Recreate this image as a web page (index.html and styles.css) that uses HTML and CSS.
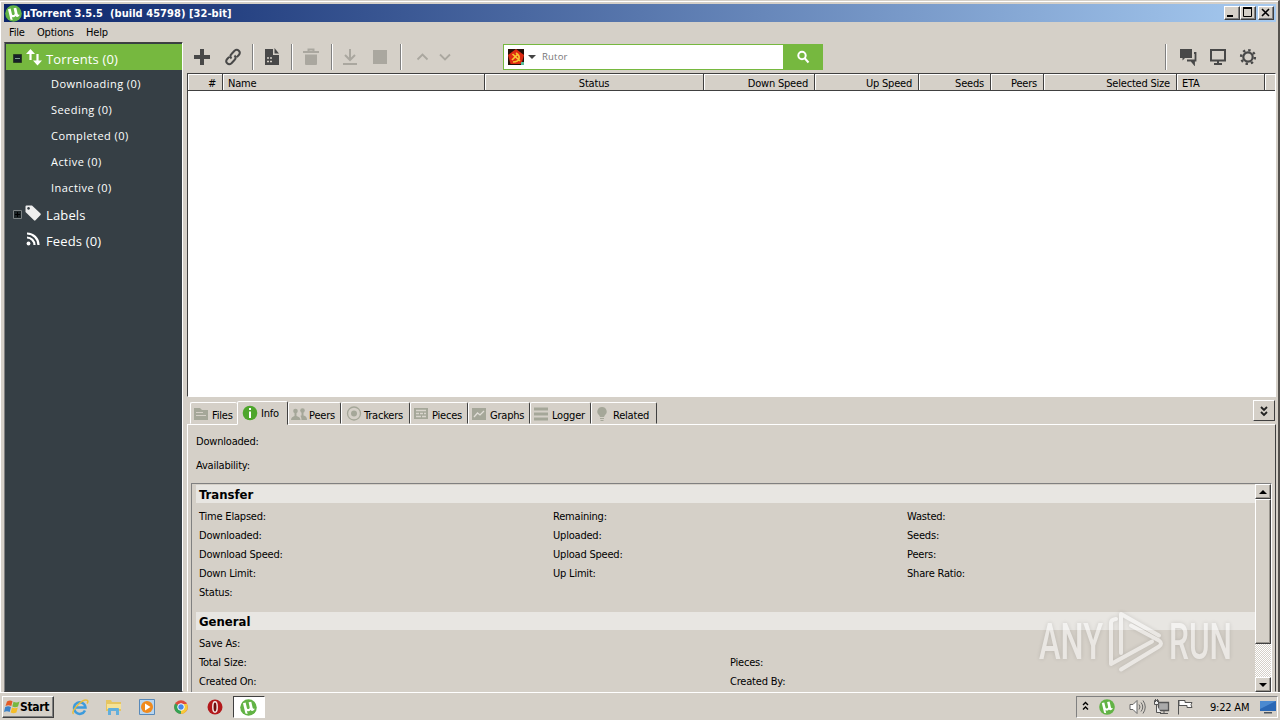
FILE: index.html
```html
<!DOCTYPE html>
<html lang="en">
  <head>
    <meta charset="UTF-8" />
    <title>µTorrent 3.5.5 (build 45798) [32-bit]</title>
    <link rel="stylesheet" href="styles.css">
  </head>
  <body>
    <!-- Shared shapes -->
    <svg class="defs" width="0" height="0">
      <symbol id="ut" viewBox="0 0 16 16">
        <circle cx="8" cy="8" r="7.8" fill="#62b345" />
        <path d="M2.800 4l2.500-.6 1.200 5c.5 1.800 2.900 1.300 2.600-.6L8.100 3l2.500-.5 1.300 5.700c.3 1.100 1 1.200 2 .8-.5 2.200-2.900 2.900-4 1.400-1 1.300-2.300 1.500-3.400.8l.7 3-2.100-.5z" fill="#fff" />
      </symbol>
    </svg>

    <div class="window">
      <div class="title-bar">
        <svg class="title-icon" width="17" height="17"><use href="#ut" /></svg>
        <span class="title-text">µTorrent 3.5.5&nbsp; (build 45798) [32-bit]</span>
        <div class="win-btn"><svg width="12" height="10"><path d="M2 9h6" stroke="#000" stroke-width="2" /></svg></div>
        <div class="win-btn"><svg width="12" height="10"><path d="M2.500 1v8.500h8V1" fill="none" stroke="#000" /><path d="M2 1h9" stroke="#000" stroke-width="2" /></svg></div>
        <div class="win-btn close"><svg width="12" height="10"><path d="M3 2l7 7M10 2L3 9" stroke="#000" stroke-width="1.600" /></svg></div>
      </div>

      <div class="menu-bar">
        <span class="m-file">File</span>
        <span class="m-options">Options</span>
        <span class="m-help">Help</span>
      </div>

      <div class="main">
        <!-- Categories -->
        <div class="sidebar">
          <div class="cat active">
            <svg width="40" height="26">
              <path d="M7.500 10.500h8v8h-8z" fill="#17202a" stroke="#2b4020" /><path d="M9 14.500h5" stroke="#7d9c8c" />
              <path d="M24.500 16V9M31.500 10v8" stroke="#fff" stroke-width="2.200" /><path d="M20 10l4.500-5L29 10zM27 16.500l4.500 5 4.500-5z" fill="#fff" />
            </svg>
            <span>Torrents (0)</span>
          </div>
          <div class="sub">Downloading (0)</div>
          <div class="sub">Seeding (0)</div>
          <div class="sub">Completed (0)</div>
          <div class="sub">Active (0)</div>
          <div class="sub">Inactive (0)</div>
          <div class="cat labels">
            <svg width="40" height="26">
              <path d="M7.500 9.500h8v8h-8z" fill="#1c2427" stroke="#7b8183" /><path d="M9 13.500h5M11.500 11v5" stroke="#000" />
              <path fill-rule="evenodd" d="M19.500 5.500q0-1 1-1h5.500l8.500 8q.7.7 0 1.400l-5 5.400q-.7.700-1.500 0l-8.500-8.300zM22.500 6a1.400 1.400 0 1 0 .1 0z" fill="#eee" />
            </svg>
            <span>Labels</span>
          </div>
          <div class="cat feeds">
            <svg width="40" height="26">
              <circle cx="22.500" cy="16.500" r="1.900" fill="#fff" /><path d="M21 10.500a7.500 7.500 0 0 1 7.500 7.500M21 6.500a11.500 11.500 0 0 1 11.500 11.500" fill="none" stroke="#fff" stroke-width="2.200" />
            </svg>
            <span>Feeds (0)</span>
          </div>
        </div>

        <div class="content">
          <div class="toolbar">
            <svg class="tool add" width="18" height="18"><path d="M9 1v16M1 9h16" stroke="#484848" stroke-width="4" /></svg>
            <svg class="tool link" width="18" height="18" fill="none" stroke="#484848" stroke-width="2"><path d="M7.500 10.500c-2-2-1-3.500 0-4.500l3-3.200c3-2.700 7 1 4.300 4.200l-2 2.200M10.500 7.500c2 2 1 3.500 0 4.500l-3 3.200c-3 2.700-7-1-4.300-4.200l2-2.200" /></svg>
            <i class="sep"></i>
            <svg class="tool create" width="16" height="17"><path d="M1 1h8v6h6v10H1z" fill="#484848" /><path d="M10.500 0l4.500 5.500h-4.500z" fill="#484848" /><path d="M3 10h2M6 10h2M3 13.500h2M6 13.500h2" stroke="#d5d0c8" stroke-width="1.500" /></svg>
            <i class="sep"></i>
            <svg class="tool trash" width="18" height="18"><path d="M1 4h16M6.500 3V1.500h5V3" fill="none" stroke="#aaa79f" stroke-width="2" /><path d="M3 6.500h12V16q0 1-1 1H4q-1 0-1-1z" fill="#aaa79f" /></svg>
            <i class="sep"></i>
            <svg class="tool down" width="16" height="18" fill="none" stroke="#aaa79f" stroke-width="2"><path d="M8 1v11M3 7l5 5 5-5M1 16h14" /></svg>
            <i class="tool stop"></i>
            <i class="sep"></i>
            <svg class="tool chev" width="36" height="10" fill="none" stroke="#aaa79f" stroke-width="1.800"><path d="M1.500 7.500l5-5 5 5M24 2.500l5 5 5-5" /></svg>

            <div class="search">
              <svg width="16" height="16">
                <path d="M0 0h16v16H0z" fill="#241008" /><path d="M8 0l8 6-2.500 9h-11L0 6z" fill="#de2a12" /><path d="M5 13c7 0 8-6 3-9M4 11l6-6M4.500 5L12 12" fill="none" stroke="#f8c532" stroke-width="1.700" /><path d="M13 13h3v3h-3z" fill="#58bb99" />
              </svg>
              <i class="drop"></i>
              <span>Rutor</span>
              <div class="go"><svg width="14" height="14" fill="none" stroke="#fff" stroke-width="2"><circle cx="6" cy="5.500" r="3.700" /><path d="M8.500 8l4 4.500" /></svg></div>
            </div>

            <div class="right-tools">
              <i class="sep"></i>
              <svg width="18" height="18"><path d="M1 1h12v9H6l-2.500 2.500V10H1z" fill="#484848" /><path d="M15 5h1.500v7.500H8M12.500 13l2.500 3v-4" fill="none" stroke="#484848" stroke-width="1.800" /></svg>
              <svg width="18" height="18"><path d="M2 2h14v10.500H2z" fill="none" stroke="#484848" stroke-width="2" /><path d="M9 13v3M5 16h8" stroke="#484848" stroke-width="2" /></svg>
              <svg width="18" height="18" fill="none" stroke="#484848"><circle cx="9" cy="9" r="4.700" stroke-width="2.200" /><circle cx="9" cy="9" r="6.900" stroke-width="2.400" stroke-dasharray="2.400 3.020" /></svg>
            </div>
          </div>

          <!-- Torrent list -->
          <div class="list">
            <div class="list-head">
              <div class="right">#</div>
              <div>Name</div>
              <div class="center">Status</div>
              <div class="right">Down Speed</div>
              <div class="right">Up Speed</div>
              <div class="right">Seeds</div>
              <div class="right">Peers</div>
              <div class="right">Selected Size</div>
              <div>ETA</div>
              <div></div>
            </div>
          </div>

          <!-- Detail tabs -->
          <div class="tabs">
            <div class="tab t-files"><svg width="16" height="16"><path d="M1 2h6l2 2h6v10H1z" fill="#a5a799" /><path d="M3 6.500h7M3 9.500h10" stroke="#d5d0c8" /></svg><span>Files</span></div>
            <div class="tab t-info"><svg width="16" height="16"><circle cx="8" cy="8" r="7.300" fill="#4ea62c" /><path d="M8 3v2M8 6.500V13" stroke="#fff" stroke-width="2" /></svg><span>Info</span></div>
            <div class="tab t-peers"><svg width="16" height="16" fill="#a5a799"><circle cx="4.500" cy="5" r="2.300" /><path d="M0 14q0-3 3.500-4V7h2v3Q9.500 11 9.500 14z" /><circle cx="11.500" cy="4.500" r="2.300" /><path d="M10.500 14H16q0-4-3.500-4.500V6h-2v3.500l-1 .3q1 2 1 4.200z" /></svg><span>Peers</span></div>
            <div class="tab t-trackers"><svg width="16" height="16"><circle cx="8" cy="7.500" r="6.500" fill="none" stroke="#a5a799" stroke-width="1.300" /><circle cx="8" cy="7.500" r="3" fill="#a5a799" /></svg><span>Trackers</span></div>
            <div class="tab t-pieces"><svg width="16" height="16"><path d="M1 2h14v11H1z" fill="#a5a799" /><path d="M3 4.500h10M3 7.500h3m1 0h3m1 0h2M3 10.500h5m1 0h4" stroke="#d9d5cd" stroke-width="1.300" /></svg><span>Pieces</span></div>
            <div class="tab t-graphs"><svg width="16" height="16"><path d="M1 2h14v12H1z" fill="#a5a799" /><path d="M3 11l3.500-4 2.500 2 4-4" fill="none" stroke="#e0ddd6" stroke-width="1.300" /></svg><span>Graphs</span></div>
            <div class="tab t-logger"><svg width="16" height="16"><path d="M1 3h14M1 8h14M1 13h14" stroke="#a5a799" stroke-width="3" /></svg><span>Logger</span></div>
            <div class="tab t-related"><svg width="16" height="16"><path d="M8 1a4.500 4.500 0 0 1 3 8L10 11H6L5 9a4.500 4.500 0 0 1 3-8z" fill="#a5a799" /><path d="M6 12.500h4M6.500 14.500h3" stroke="#a5a799" /></svg><span>Related</span></div>
            <div class="collapse"><svg width="10" height="12" fill="none" stroke="#222" stroke-width="1.800"><path d="M2 2l3 3 3-3M2 7l3 3 3-3" /></svg></div>
          </div>

          <div class="panel">
            <div class="bar-label">Downloaded:</div>
            <div class="bar-label">Availability:</div>
            <div class="info-box">
              <div class="info">
                <h2>Transfer</h2>
                <div class="fields three">
                  <span>Time Elapsed:</span><span>Remaining:</span><span>Wasted:</span>
                  <span>Downloaded:</span><span>Uploaded:</span><span>Seeds:</span>
                  <span>Download Speed:</span><span>Upload Speed:</span><span>Peers:</span>
                  <span>Down Limit:</span><span>Up Limit:</span><span>Share Ratio:</span>
                  <span>Status:</span>
                </div>
                <h2>General</h2>
                <div class="fields two">
                  <span>Save As:</span><span></span>
                  <span>Total Size:</span><span>Pieces:</span>
                  <span>Created On:</span><span>Created By:</span>
                </div>
              </div>
              <div class="scroll">
                <div class="raised arrow"><svg width="8" height="4"><path d="M0 4l4-4 4 4z" /></svg></div>
                <div class="raised thumb"></div>
                <div class="raised arrow last"><svg width="8" height="4"><path d="M0 0h8L4 4z" /></svg></div>
              </div>
            </div>
          </div>
        </div>
      </div>
    </div>

    <div class="taskbar">
      <div class="start">
        <svg width="16" height="16"><path d="M3 2.500q3-2 5.500-.3L7.300 7Q4.500 5.500 1.500 7z" fill="#e35b26" /><path d="M9.500 2.700q3 1.500 6-.2L14 7.500q-3 1.500-5.700 0z" fill="#76b83f" /><path d="M1.200 8q3-1.700 5.800 0l-1.300 5Q3 11.500 0 13z" fill="#3c82c8" /><path d="M8 8.500q3 1.500 5.800 0l-1.400 5q-3 1.500-5.700 0z" fill="#f5bd28" /></svg>
        <b>Start</b>
      </div>
      <div class="quick">
        <svg width="18" height="18"><path d="M14 12.500A5.800 5.800 0 1 1 14.500 9.500H4.500" fill="none" stroke="#3d9bdc" stroke-width="2.500" /><path d="M2.500 16C-1 13 12 0 16.500 2.500q1 1-.5 3" fill="none" stroke="#e8bd3c" stroke-width="1.500" /></svg>
        <svg width="18" height="18"><path d="M1 2h5l1 2h9v9H1z" fill="#e6c561" /><path d="M2 6h14v5H2z" fill="#f6e296" /><path d="M3 17v-6q0-1 1-1h9q1 0 1 1v6h-3v-4H6v4z" fill="#62afdc" /></svg>
        <svg width="18" height="18"><path d="M1.500 1.500h15v15h-15z" fill="#b8d5ef" stroke="#5889b9" /><circle cx="9" cy="9" r="6" fill="#f08a1d" /><path d="M7 5.500l5.500 3.500L7 12.500z" fill="#fff" /></svg>
        <svg width="18" height="18"><circle cx="9" cy="9" r="6.800" fill="#dd4b3d" /><path d="M9 9L3.100 5.600A6.800 6.800 0 0 0 9 15.800z" fill="#35a354" /><path d="M9 9v6.800A6.800 6.800 0 0 0 15 6H9z" fill="#f7ca38" /><circle cx="9" cy="9" r="3.300" fill="#4688e8" stroke="#fff" /></svg>
        <svg width="18" height="18"><circle cx="9" cy="9" r="7.500" fill="#b3181b" /><ellipse cx="9" cy="9" rx="2.200" ry="5.200" fill="#700c0d" stroke="#f3e6e4" stroke-width="1.500" /></svg>
      </div>
      <div class="task"><svg width="17" height="17"><use href="#ut" /></svg></div>
      <div class="tray">
        <svg class="up" width="8" height="10" fill="none" stroke="#000" stroke-width="1.400"><path d="M1 4l2.500-2.500L6 4M1 8.500L3.500 6 6 8.500" /></svg>
        <svg class="t-ut" width="16" height="16"><use href="#ut" /></svg>
        <svg class="vol" width="17" height="16" fill="#fff" stroke="#666"><path d="M1 5.500h3l4-4v13l-4-4H1z" /><path d="M10 5.500q2 2.500 0 5M12 3.500q3.500 4.500 0 9M14 1.500q4.500 6.500 0 13" fill="none" /></svg>
        <svg class="net" width="17" height="16" fill="#eee" stroke="#555"><path d="M5.500 3.500h10v8h-10z" fill="#aaa" stroke-width="1.300" /><path d="M7 14.500h8M11 12v2M1.500 1.500h4v4h-4zM3.500 6v7.500H8M2.500 0v3M4.500 0v3" /></svg>
        <svg class="flag" width="17" height="16" fill="#fff" stroke="#555"><path d="M1.500 1v14.500M2 1.500h6v2h7q-2 2 0 5h-5v-2H2z" /></svg>
        <span class="clock">9:22 AM</span>
        <svg class="desk" width="16" height="14"><path d="M0 1h16v10H0z" fill="#2a68b5" /><path d="M0 1h16L0 9z" fill="#4b8ad0" /><path d="M4 12h8v1.500H4z" fill="#49535d" /></svg>
      </div>
    </div>

    <!-- Watermark over the window -->
    <svg class="watermark" width="200" height="70">
      <g class="shade"><use href="#mark" /></g>
      <g id="mark">
        <text x="2" y="52" textLength="64" lengthAdjust="spacingAndGlyphs">ANY</text>
        <text x="132" y="52" textLength="63" lengthAdjust="spacingAndGlyphs">RUN</text>
        <path d="M84 46V7l38 21.500M79 12q-5 .5-5 4V57l41-22.500M84 62.500l38-23q4-3 0-6L94 18.500" />
      </g>
    </svg>
  </body>
</html>
```
FILE: styles.css
```css
* {
  box-sizing: border-box;
}

body {
  margin: 0;
  width: 1280px;
  height: 720px;
  overflow: hidden;
  background: #d5d0c8;
  color: #000;
  font-family: "DejaVu Sans Condensed", "DejaVu Sans", sans-serif;
  font-size: 11px;
  letter-spacing: -0.2px;
  white-space: nowrap;
}

svg {
  display: block;
  flex: none;
}

.defs {
  position: absolute;
}

.window {
  height: 692px;
  padding: 3px 2px 0 4px;
  border-right: 2px solid #55524e;
  border-top: 1px solid #d5d0c8;
  box-shadow: inset 1px 1px #fff;
  overflow: hidden;
}

.title-bar {
  display: flex;
  align-items: center;
  height: 18px;
  padding: 0 2px 0 1px;
  background: linear-gradient(90deg, #0a246a, #a6caf0);
  color: #fff;
}

.title-text {
  flex: 1;
  margin-left: 1px;
  font-size: 11px;
  font-weight: bold;
  letter-spacing: 0.05px;
}

.win-btn {
  width: 16px;
  height: 14px;
  background: #d5d0c8;
  border: 1px solid;
  border-color: #fff #404040 #404040 #fff;
  box-shadow: inset -1px -1px #808080;
}

.win-btn.close {
  margin-left: 2px;
}

.menu-bar {
  display: flex;
  height: 20px;
  padding-left: 5px;
  line-height: 22px;
}

.m-file {
  width: 28px;
}

.m-options {
  width: 49px;
}

.main {
  display: flex;
  gap: 4px;
  height: 650px;
}

/* Sidebar */
.sidebar {
  width: 179px;
  padding: 1px 0 0 1px;
  background: #363f45;
  border: 1px solid;
  border-color: #404040 #fff #404040 #808080;
  color: #fff;
  font-family: "Open Sans", sans-serif;
  font-size: 11px;
  letter-spacing: 0.45px;
}

.cat {
  display: flex;
  align-items: center;
  height: 26px;
  font-size: 13px;
  letter-spacing: 0.15px;
}

.cat span {
  padding-top: 1px;
}

.cat.active {
  background: #76b83f;
}

.cat.active span {
  padding-top: 3px;
}

.cat.labels {
  margin-top: 1px;
}

.sub {
  height: 26px;
  padding-left: 45px;
  line-height: 27px;
}

/* Toolbar */
.content {
  flex: 1;
  min-width: 0;
}

.toolbar {
  display: flex;
  align-items: center;
  height: 31px;
  padding: 0 0 2px 6px;
}

.sep {
  width: 2px;
  height: 26px;
  border-left: 1px solid #808080;
  border-right: 1px solid #fff;
}

.tool {
  flex: none;
}

.link {
  margin: 0 10px 0 13px;
}

.create {
  margin: 0 11px 0 10px;
}

.trash {
  margin: 0 11px 0 9px;
}

.down {
  margin: 0 15px 0 9px;
}

.stop {
  width: 14px;
  height: 14px;
  margin-right: 13px;
  background: #aaa79f;
}

.chev {
  margin-left: 14px;
}

.search {
  display: flex;
  align-items: center;
  width: 320px;
  height: 26px;
  margin-left: 51px;
  padding-left: 4px;
  background: #fff;
  border: 1px solid #76b83f;
  color: #777;
  font-family: "Open Sans", sans-serif;
  font-size: 9.5px;
  letter-spacing: 0.2px;
}

.drop {
  margin: 0 6px 0 4px;
  border: 4px solid transparent;
  border-top-color: #444;
  border-bottom: 0;
}

.go {
  display: flex;
  align-items: center;
  justify-content: center;
  width: 40px;
  height: 26px;
  margin: 0 -1px 0 auto;
  background: #76b83f;
}

.right-tools {
  display: flex;
  align-items: center;
  gap: 12px;
  margin: 0 19px 0 auto;
}

/* Torrent list */
.list {
  height: 324px;
  background: #fff;
  border: 1px solid;
  border-color: #404040 #fff #fff #404040;
}

.list-head {
  display: grid;
  grid-template-columns: 35px 262px 219px 111px 104px 72px 53px 133px 88px 1fr;
  height: 17px;
  background: #d5d0c8;
  border-bottom: 1px solid #404040;
  line-height: 19px;
}

.list-head div {
  height: 16px;
  padding: 0 5px;
  border-right: 1px solid #404040;
  box-shadow: inset 1px 1px #fff;
}

.list-head div:last-child {
  border-right: 0;
}

.list-head .right {
  padding-right: 6px;
  text-align: right;
}

.list-head .center {
  text-align: center;
}

/* Tabs */
.tabs {
  display: flex;
  align-items: flex-end;
  height: 27px;
  padding-left: 3px;
}

.tab {
  display: flex;
  align-items: center;
  gap: 3px;
  height: 22px;
  padding: 2px 0 0 2px;
  border: 1px solid;
  border-color: #fff #404040 transparent #fff;
  border-radius: 2px 2px 0 0;
}

.tab span {
  padding-top: 2px;
}

.t-files {
  width: 47px;
  border-right: 0;
}

.t-info {
  z-index: 1;
  width: 51px;
  height: 24px;
  margin-bottom: -1px;
  padding: 0 0 1px 4px;
  background: #d5d0c8;
}

.t-peers {
  gap: 2px;
  width: 53px;
}

.t-trackers {
  gap: 2px;
  width: 69px;
  padding-left: 4px;
}

.t-pieces {
  width: 58px;
}

.t-graphs {
  width: 62px;
}

.t-logger {
  width: 61px;
}

.t-related {
  width: 66px;
}

.collapse {
  display: flex;
  align-items: center;
  justify-content: center;
  width: 22px;
  height: 21px;
  margin: 0 1px 3px auto;
  border: 1px solid;
  border-color: #fff #404040 #404040 #fff;
}

.panel {
  height: 268px;
  padding: 5px 3px 0 3px;
  border: 1px solid;
  border-color: #fff #404040 transparent #fff;
}

.bar-label {
  height: 24px;
  padding-left: 5px;
  line-height: 24px;
}

.info-box {
  display: flex;
  height: 210px;
  margin-top: 5px;
  border: 1px solid;
  border-color: #808080 #fff transparent #808080;
}

.info {
  flex: 1;
  padding: 1px 0 0 4px;
}

h2 {
  height: 18px;
  margin: 0;
  padding-left: 3px;
  background: #e8e6e2;
  font-size: 13px;
  line-height: 19px;
  letter-spacing: 0;
}

.fields {
  display: grid;
  grid-auto-rows: 19px;
  padding: 4px 0 10px 3px;
  line-height: 19px;
}

.three {
  grid-template-columns: 354px 354px 1fr;
}

.two {
  grid-template-columns: 531px 1fr;
}

.scroll {
  display: flex;
  flex-direction: column;
  width: 16px;
  background: repeating-conic-gradient(#fff 0 25%, #d5d0c8 0 50%) 0 0 / 2px 2px;
}

.raised {
  background: #d5d0c8;
  border: 1px solid;
  border-color: #fff #404040 #404040 #fff;
  box-shadow: inset -1px -1px #9a968f;
}

.arrow {
  display: flex;
  align-items: center;
  justify-content: center;
  height: 15px;
}

.arrow.last {
  margin-top: auto;
}

.thumb {
  height: 145px;
}

/* Taskbar */
.taskbar {
  display: flex;
  align-items: center;
  height: 28px;
  padding: 1px 2px 0;
  background: #d5d0c8;
  border-top: 1px solid #fff;
}

.start {
  display: flex;
  align-items: center;
  width: 52px;
  height: 22px;
  padding-left: 1px;
  border: 1px solid;
  border-color: #fff #404040 #404040 #fff;
  box-shadow: inset -1px -1px #808080;
  font-size: 12px;
  letter-spacing: -0.3px;
}

.quick {
  display: flex;
  gap: 15.700px;
  margin-left: 17px;
}

.task {
  display: flex;
  align-items: center;
  justify-content: center;
  width: 32px;
  height: 22px;
  margin-left: 9px;
  background: #fff;
  border: 1px solid;
  border-color: #404040 #fff #fff #404040;
}

.tray {
  display: flex;
  align-items: center;
  width: 202px;
  height: 22px;
  margin-left: auto;
  border: 1px solid;
  border-color: #808080 #fff #fff #808080;
}

.up {
  margin: 0 9px 3px 5px;
}

.vol {
  margin-left: 14px;
}

.net {
  margin-left: 7px;
}

.flag {
  margin-left: 7px;
}

.clock {
  margin-left: 16px;
}

.desk {
  margin-left: auto;
  margin-right: 1px;
}

.watermark {
  position: absolute;
  left: 1037px;
  top: 607px;
  opacity: 0.5;
  overflow: visible;
}

.watermark text {
  fill: #fff;
  stroke: none;
  font-family: Roboto, sans-serif;
  font-size: 50px;
  font-weight: 500;
  letter-spacing: 0;
}

.watermark path {
  fill: none;
  stroke: #fff;
  stroke-width: 4;
  stroke-linecap: round;
  stroke-linejoin: round;
}

.shade {
  filter: brightness(0) blur(2px);
  opacity: 0.25;
}
```
